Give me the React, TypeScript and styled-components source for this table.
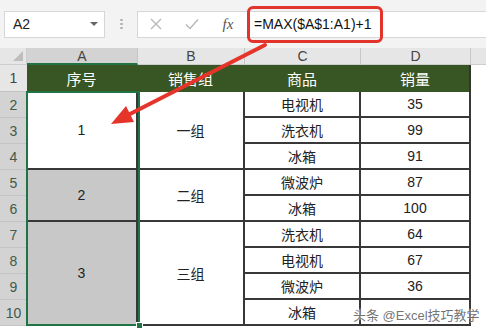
import styled, { createGlobalStyle } from 'styled-components';

const GlobalStyle = createGlobalStyle`
  html, body {
    margin: 0;
    padding: 0;
    background: #fff;
  }
  body {
    font-family: "Liberation Sans", "Noto Sans CJK SC", sans-serif;
  }
`;

const Screen = styled.div`
  position: relative;
  width: 486px;
  height: 329px;
  overflow: hidden;
  background: #fff;
`;

// formula bar
const FormulaBar = styled.div`
  display: flex;
  align-items: center;
  height: 48px;
  padding-left: 4px;
  box-sizing: border-box;
  background: #f3f3f3;
`;

const NameBox = styled.div`
  display: flex;
  align-items: center;
  justify-content: space-between;
  width: 101px;
  height: 27px;
  padding: 0 6px 0 8px;
  box-sizing: border-box;
  background: #fff;
  border: 1px solid #d6d6d6;
  font-size: 14px;
  color: #222;
`;

const Caret = styled.span`
  width: 0;
  height: 0;
  border-left: 4px solid transparent;
  border-right: 4px solid transparent;
  border-top: 4px solid #666;
`;

const Dots = styled.div`
  width: 3px;
  height: 12px;
  margin: 0 14px 0 15px;
  background: radial-gradient(circle, #b0b0b0 1px, transparent 1.4px);
  background-size: 3px 4px;
`;

const FormulaInput = styled.div`
  flex: 1;
  display: flex;
  align-items: center;
  height: 27px;
  box-sizing: border-box;
  background: #fff;
  border: 1px solid #d6d6d6;
  border-right: none;
`;

const ToolIcon = styled.div`
  display: flex;
  align-items: center;
  justify-content: center;
  width: 36px;
  height: 100%;
  color: #555;
  font-family: "Liberation Serif", serif;
  font-style: italic;
  font-size: 15px;
`;

const Highlight = styled.div`
  display: flex;
  align-items: center;
  width: 136px;
  height: 37px;
  margin-left: 1px;
  padding-left: 4px;
  box-sizing: border-box;
  border: 3px solid #e2342b;
  border-radius: 6px;
  font-size: 14px;
  color: #111;
  white-space: nowrap;
`;

// sheet
const Sheet = styled.div`
  display: grid;
  grid-template-columns: 27px 111px 107px 116px 110px 15px;
  grid-template-rows: 17px 27px repeat(9, 26px);
`;

const Corner = styled.div`
  position: relative;
  background: #e6e6e6;
  border-right: 1px solid #cdcdcd;
  border-bottom: 1px solid #cdcdcd;

  &::after {
    content: '';
    position: absolute;
    right: 3px;
    bottom: 3px;
    border-left: 10px solid transparent;
    border-bottom: 10px solid #bdbdbd;
  }
`;

const ColHead = styled.div<{ $selected?: boolean }>`
  display: flex;
  align-items: center;
  justify-content: center;
  box-sizing: border-box;
  background: ${(p) => (p.$selected ? '#d3d3d3' : '#e6e6e6')};
  border-right: 1px solid #c6c6c6;
  border-bottom: ${(p) => (p.$selected ? '2px solid #217346' : '1px solid #cdcdcd')};
  font-size: 14px;
  color: #444;
`;

const RowHead = styled.div<{ $row: number; $selected?: boolean }>`
  display: flex;
  align-items: center;
  justify-content: center;
  grid-column: 1;
  grid-row: ${(p) => p.$row};
  box-sizing: border-box;
  background: ${(p) => (p.$selected ? '#d3d3d3' : '#e6e6e6')};
  border-bottom: 1px solid #c3c3c3;
  font-size: 14px;
  color: ${(p) => (p.$selected ? '#3d5a4a' : '#444')};
`;

const HeadCell = styled.div<{ $col: number; $last?: boolean }>`
  display: flex;
  align-items: center;
  justify-content: center;
  grid-column: ${(p) => p.$col};
  grid-row: 2;
  background: #375623;
  border-right: 2px solid ${(p) => (p.$last ? '#333' : '#375623')};
  color: #fff;
  font-size: 15px;
`;

const Cell = styled.div<{ $row: number; $col: number; $span?: number; $fill?: string }>`
  display: flex;
  align-items: center;
  justify-content: center;
  box-sizing: border-box;
  grid-column: ${(p) => p.$col};
  grid-row: ${(p) => p.$row} / span ${(p) => p.$span ?? 1};
  background: ${(p) => p.$fill ?? '#fff'};
  border-right: 2px solid #383838;
  border-bottom: 2px solid #383838;
  font-size: 14px;
  color: #222;
`;

const Filler = styled.div`
  background: #e6e6e6;
  border-bottom: 1px solid #cdcdcd;
`;

const Selection = styled.div`
  position: relative;
  grid-column: 2;
  grid-row: 3 / 12;
  margin: -1px -2px 0 -1px;
  border: 2px solid #217346;
  pointer-events: none;
`;

const FillHandle = styled.span`
  position: absolute;
  right: -5px;
  bottom: -5px;
  width: 5px;
  height: 5px;
  background: #217346;
  border: 1px solid #fff;
`;

const Overlay = styled.svg`
  position: absolute;
  inset: 0;
  pointer-events: none;
`;

const Watermark = styled.div`
  position: absolute;
  left: 353px;
  top: 305px;
  font-size: 13px;
  color: rgba(90, 90, 90, 0.85);
  text-shadow: 0 0 2px #fff, 0 0 2px #fff;
  white-space: nowrap;
`;

type Group = { no: string; name: string; items: [string, string][]; fill: string };

const groups: Group[] = [
  { no: '1', name: '一组', fill: '#fff', items: [['电视机', '35'], ['洗衣机', '99'], ['冰箱', '91']] },
  { no: '2', name: '二组', fill: '#c8c8c8', items: [['微波炉', '87'], ['冰箱', '100']] },
  {
    no: '3',
    name: '三组',
    fill: '#c8c8c8',
    items: [['洗衣机', '64'], ['电视机', '67'], ['微波炉', '36'], ['冰箱', '']],
  },
];

const App = () => {
  let row = 3;
  return (
    <Screen>
      <GlobalStyle />
      <FormulaBar>
        <NameBox>
          A2
          <Caret />
        </NameBox>
        <Dots />
        <FormulaInput>
          <ToolIcon>
            <svg width="12" height="12" viewBox="0 0 12 12">
              <path d="M1 1 L11 11 M11 1 L1 11" stroke="#b8b8b8" strokeWidth="1.4" />
            </svg>
          </ToolIcon>
          <ToolIcon>
            <svg width="14" height="12" viewBox="0 0 14 12">
              <path d="M1 6.5 L5 10.5 L13 1.5" stroke="#b8b8b8" strokeWidth="1.4" fill="none" />
            </svg>
          </ToolIcon>
          <ToolIcon>fx</ToolIcon>
          <Highlight>=MAX($A$1:A1)+1</Highlight>
        </FormulaInput>
      </FormulaBar>

      <Sheet>
        <Corner />
        <ColHead $selected>A</ColHead>
        <ColHead>B</ColHead>
        <ColHead>C</ColHead>
        <ColHead>D</ColHead>
        <Filler />

        {Array.from({ length: 10 }, (_, i) => (
          <RowHead key={i} $row={i + 2} $selected={i > 0}>
            {i + 1}
          </RowHead>
        ))}

        <HeadCell $col={2}>序号</HeadCell>
        <HeadCell $col={3}>销售组</HeadCell>
        <HeadCell $col={4}>商品</HeadCell>
        <HeadCell $col={5} $last>销量</HeadCell>

        {groups.map((g) => {
          const start = row;
          row += g.items.length;
          return [
            <Cell key={g.no + 'a'} $row={start} $col={2} $span={g.items.length} $fill={g.fill}>
              {g.no}
            </Cell>,
            <Cell key={g.no + 'b'} $row={start} $col={3} $span={g.items.length}>
              {g.name}
            </Cell>,
            ...g.items.map(([item, qty], j) => [
              <Cell key={g.no + 'c' + j} $row={start + j} $col={4}>
                {item}
              </Cell>,
              <Cell key={g.no + 'd' + j} $row={start + j} $col={5}>
                {qty}
              </Cell>,
            ]),
          ];
        })}

        <Selection>
          <FillHandle />
        </Selection>
      </Sheet>

      <Overlay width="486" height="329" viewBox="0 0 486 329">
        <line x1="265" y1="45" x2="128" y2="115" stroke="#e5352b" strokeWidth="4" strokeLinecap="round" />
        <polygon points="111,124 134,122 126,106" fill="#e5352b" />
      </Overlay>
      <Watermark>头条 @Excel技巧教学</Watermark>
    </Screen>
  );
};

export default App;
